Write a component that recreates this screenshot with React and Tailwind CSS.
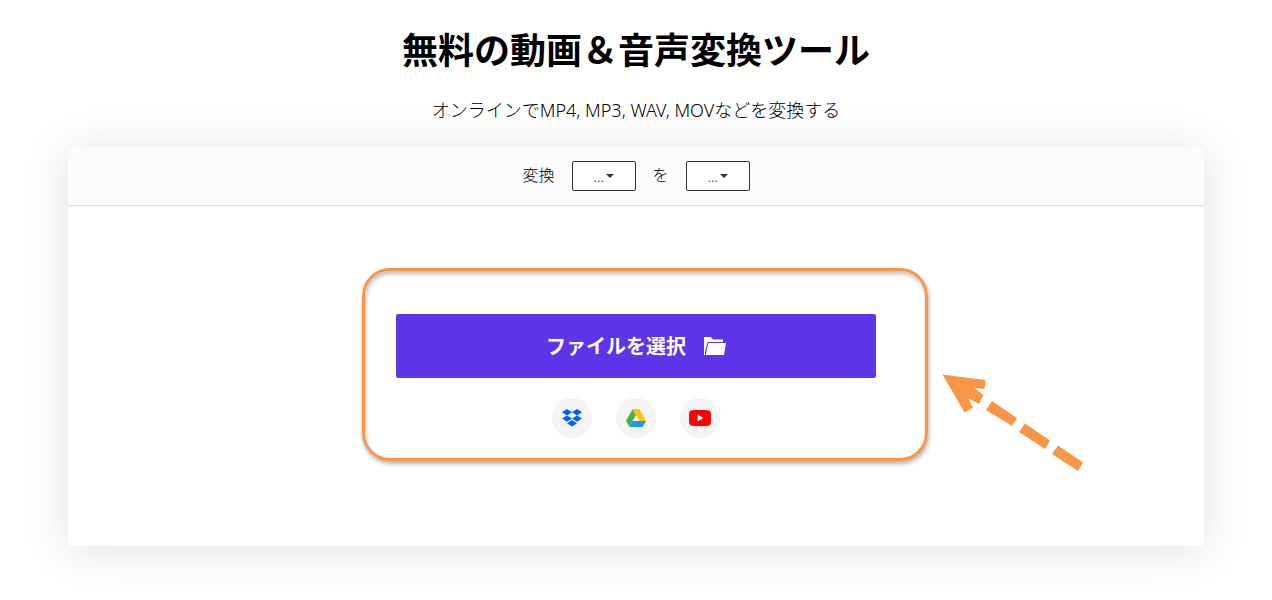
const FORMATS = ['...', 'MP4', 'MP3', 'WAV', 'MOV']

function FormatSelect({ id, label }) {
  return (
    <span className="relative block">
      <select
        id={id}
        aria-label={label}
        className="block h-[30px] w-16 appearance-none rounded-xs border border-[#333] bg-white pl-[21px] text-sm text-[#333]"
      >
        {FORMATS.map(f => <option key={f}>{f}</option>)}
      </select>
      {/* Caret */}
      <svg viewBox="0 0 8 4" className="pointer-events-none absolute top-[13px] right-[22px] h-1 w-2" fill="#333">
        <path d="M0 0h8L4 4z" />
      </svg>
    </span>
  )
}

function FolderIcon() {
  return (
    <svg viewBox="0 0 22 18" className="h-[18px] w-[22px]" fill="currentColor" aria-hidden="true">
      <path d="M0 0h7l2 2.5h10V5H3.5L1 15.5V18H0z" />
      <path d="M4.3 6H22l-2 12H1.8z" />
    </svg>
  )
}

function DropboxIcon() {
  return (
    <svg viewBox="0 0 20 18" className="h-[18px] w-5" fill="#0061FE" aria-hidden="true">
      <path d="M5 0l5 3.2-5 3.2-5-3.2zM15 0l5 3.2-5 3.2-5-3.2zM5 6.4l5 3.2-5 3.2-5-3.2zM15 6.4l5 3.2-5 3.2-5-3.2zM10 11.1l5 3.2-5 3.3-5-3.3z" />
    </svg>
  )
}

function DriveIcon() {
  return (
    <svg viewBox="0 0 20 18" className="h-[18px] w-5" aria-hidden="true">
      <path d="M6.7 0L0 11.7 3.4 18l6.6-12z" fill="#4CAF50" />
      <path d="M6.7 0h6.6L20 11.9h-6.7z" fill="#FFC107" />
      <path d="M6.7 11.9H20L16.6 18H3.4z" fill="#2196F3" />
    </svg>
  )
}

function YoutubeIcon() {
  return (
    <svg viewBox="0 0 22 16" className="h-4 w-[22px]" aria-hidden="true">
      <path d="M3 .3C7 0 15 0 19 .3c2 .2 2.7 1.2 2.9 3.2.2 3 .2 6 0 9-.2 2-.9 3-2.9 3.2-4 .4-12 .4-16 0-2-.2-2.7-1.2-2.9-3.2-.2-3-.2-6 0-9C.3 1.5 1 .5 3 .3z" fill="#FF0000" />
      <path d="M8.7 4.7v6.6L14.5 8z" fill="#fff" />
    </svg>
  )
}

const SOURCES = [
  { name: 'Dropbox', Icon: DropboxIcon },
  { name: 'Google Drive', Icon: DriveIcon },
  { name: 'YouTube', Icon: YoutubeIcon },
]

export default function App() {
  return (
    <main className="overflow-hidden bg-white px-[68px] pt-6 pb-[54px] font-['Noto_Sans_CJK_JP',sans-serif] text-black">
      <h1 className="text-center text-4xl leading-12 font-bold">無料の動画＆音声変換ツール</h1>
      <p className="mt-6 text-center font-['Noto_Sans','Noto_Sans_CJK_JP',sans-serif] text-lg leading-7 font-light">
        オンラインでMP4, MP3, WAV, MOVなどを変換する
      </p>

      <section className="mt-[23px] rounded-sm bg-white shadow-[0_4px_48px_rgba(0,0,0,0.12)]">
        {/* Format bar */}
        <div className="flex h-[59px] items-center justify-center gap-[17px] rounded-t-sm border-b border-[#dcdde3] bg-[#fcfcfc] font-light">
          <label htmlFor="from" className="pb-1">変換</label>
          <FormatSelect id="from" label="変換" />
          <label htmlFor="to" className="pb-1">を</label>
          <FormatSelect id="to" label="を" />
        </div>

        {/* Upload area */}
        <div className="px-4 py-[108px]">
          <div className="relative mx-auto max-w-[480px]">
            <div className="pointer-events-none absolute -top-[46px] -right-[52px] -bottom-[23px] -left-[34px] rounded-[28px] border-3 border-[#f79646] shadow-[1px_3px_4px_rgba(0,0,0,0.3),inset_1px_3px_4px_rgba(0,0,0,0.25)]" />
            <button
              type="button"
              className="relative flex h-16 w-full items-center justify-center gap-[18px] rounded-xs bg-[#5e35e8] text-xl font-bold text-white"
            >
              ファイルを選択
              <FolderIcon />
            </button>
            <div className="relative mt-5 flex justify-center gap-6">
              {SOURCES.map(({ name, Icon }) => (
                <button
                  key={name}
                  type="button"
                  aria-label={name}
                  className="flex size-10 items-center justify-center rounded-full bg-[#f4f4f4]"
                >
                  <Icon />
                </button>
              ))}
            </div>

            {/* Dashed arrow */}
            <svg
              viewBox="0 0 144 100"
              className="pointer-events-none absolute top-[58px] left-[544px] h-[100px] w-36"
              fill="#f79646"
              aria-hidden="true"
            >
              <path d="M2.5 2.5L45.5 8L44.5 17L34.5 16L43.5 23L39 32L28.5 26.5L33 36L24.5 40.5z" />
              <path d="M52 29l25 17-5 8-26-16zM85 51.5l25 17-5 8.5-26-17zM118 73.5l25 17-5 8.5-26-17z" />
            </svg>
          </div>
        </div>
      </section>
    </main>
  )
}
